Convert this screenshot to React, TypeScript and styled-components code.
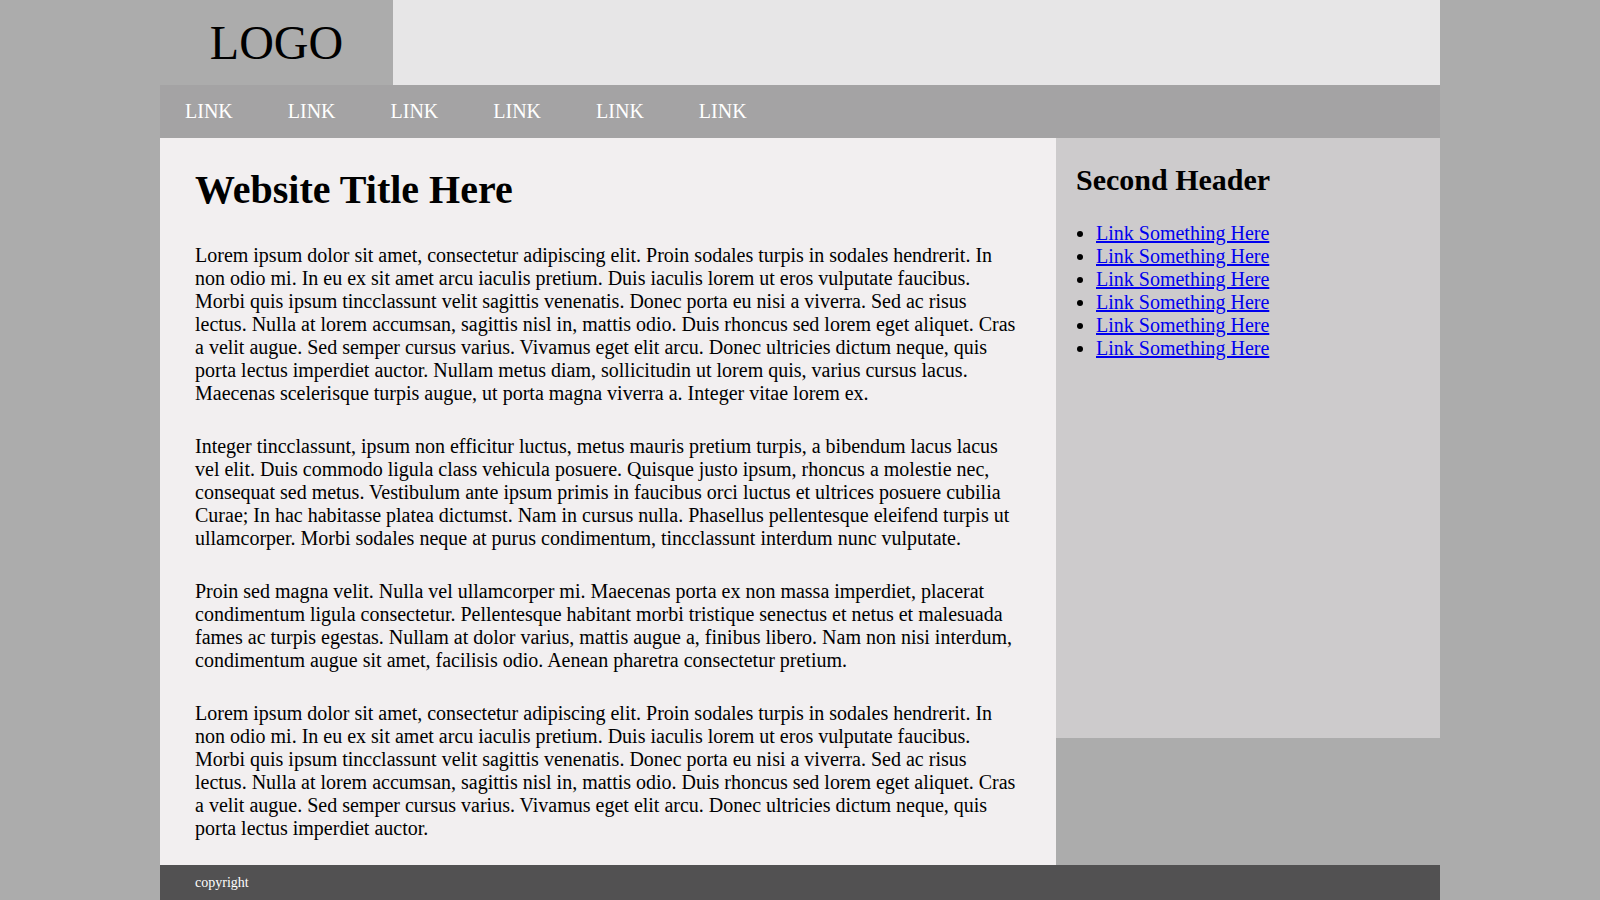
import React from 'react';
import styled, { createGlobalStyle } from 'styled-components';

const GlobalStyle = createGlobalStyle`
  html, body {
    margin: 0;
    padding: 0;
  }
  body {
    background: #acacac;
    font-family: 'Liberation Serif', 'Times New Roman', serif;
    font-size: 20px;
    color: #000;
  }
`;

const Page = styled.div`
  width: 1280px;
  margin: 0 auto;
  display: flex;
  flex-direction: column;
`;

const Header = styled.header`
  display: flex;
  height: 85px;
`;

const LogoBox = styled.div`
  width: 233px;
  display: flex;
  align-items: center;
  justify-content: center;
  font-size: 48px;
`;

const Banner = styled.div`
  flex: 1;
  background: #e7e6e7;
`;

const Nav = styled.nav`
  height: 53px;
  display: flex;
  align-items: center;
  background: #a4a3a4;
`;

const NavLink = styled.a`
  padding: 0 25px;
  margin-right: 5px;
  color: #fff;
  text-decoration: none;
  text-transform: uppercase;
  font-size: 20px;
`;

const Body = styled.div`
  display: flex;
  align-items: flex-start;
`;

const Main = styled.main`
  width: 70%;
  box-sizing: border-box;
  padding: 0 35px;
  background: #f2eff0;
  display: flow-root;
`;

const Title = styled.h1`
  font-size: 40px;
  margin: 28px 0 31px;
`;

const Para = styled.p`
  margin: 0 0 30px;
  line-height: 23px;

  &:last-child {
    margin-bottom: 25px;
  }
`;

const Sidebar = styled.aside`
  width: 30%;
  height: 600px;
  box-sizing: border-box;
  padding: 0 20px;
  background: #cdcbcc;
  display: flow-root;
`;

const SideTitle = styled.h2`
  font-size: 30px;
  margin: 25px 0;
`;

const LinkList = styled.ul`
  margin: 0;
  padding-left: 20px;
  line-height: 23px;
`;

const SideLink = styled.a`
  color: #0000ee;
  text-decoration: underline;
`;

const Footer = styled.footer`
  height: 35px;
  display: flex;
  align-items: center;
  padding: 0 35px;
  background: #525152;
  color: #fff;
  font-size: 14px;
`;

const paragraphs = [
  'Lorem ipsum dolor sit amet, consectetur adipiscing elit. Proin sodales turpis in sodales hendrerit. In non odio mi. In eu ex sit amet arcu iaculis pretium. Duis iaculis lorem ut eros vulputate faucibus. Morbi quis ipsum tincclassunt velit sagittis venenatis. Donec porta eu nisi a viverra. Sed ac risus lectus. Nulla at lorem accumsan, sagittis nisl in, mattis odio. Duis rhoncus sed lorem eget aliquet. Cras a velit augue. Sed semper cursus varius. Vivamus eget elit arcu. Donec ultricies dictum neque, quis porta lectus imperdiet auctor. Nullam metus diam, sollicitudin ut lorem quis, varius cursus lacus. Maecenas scelerisque turpis augue, ut porta magna viverra a. Integer vitae lorem ex.',
  'Integer tincclassunt, ipsum non efficitur luctus, metus mauris pretium turpis, a bibendum lacus lacus vel elit. Duis commodo ligula class vehicula posuere. Quisque justo ipsum, rhoncus a molestie nec, consequat sed metus. Vestibulum ante ipsum primis in faucibus orci luctus et ultrices posuere cubilia Curae; In hac habitasse platea dictumst. Nam in cursus nulla. Phasellus pellentesque eleifend turpis ut ullamcorper. Morbi sodales neque at purus condimentum, tincclassunt interdum nunc vulputate.',
  'Proin sed magna velit. Nulla vel ullamcorper mi. Maecenas porta ex non massa imperdiet, placerat condimentum ligula consectetur. Pellentesque habitant morbi tristique senectus et netus et malesuada fames ac turpis egestas. Nullam at dolor varius, mattis augue a, finibus libero. Nam non nisi interdum, condimentum augue sit amet, facilisis odio. Aenean pharetra consectetur pretium.',
  'Lorem ipsum dolor sit amet, consectetur adipiscing elit. Proin sodales turpis in sodales hendrerit. In non odio mi. In eu ex sit amet arcu iaculis pretium. Duis iaculis lorem ut eros vulputate faucibus. Morbi quis ipsum tincclassunt velit sagittis venenatis. Donec porta eu nisi a viverra. Sed ac risus lectus. Nulla at lorem accumsan, sagittis nisl in, mattis odio. Duis rhoncus sed lorem eget aliquet. Cras a velit augue. Sed semper cursus varius. Vivamus eget elit arcu. Donec ultricies dictum neque, quis porta lectus imperdiet auctor.',
];

export default function App(): JSX.Element {
  return (
    <>
      <GlobalStyle />
      <Page>
        <Header>
          <LogoBox>LOGO</LogoBox>
          <Banner />
        </Header>
        <Nav>
          {Array.from({ length: 6 }).map((_, i) => (
            <NavLink key={i} href="#">
              Link
            </NavLink>
          ))}
        </Nav>
        <Body>
          <Main>
            <Title>Website Title Here</Title>
            {paragraphs.map((text, i) => (
              <Para key={i}>{text}</Para>
            ))}
          </Main>
          <Sidebar>
            <SideTitle>Second Header</SideTitle>
            <LinkList>
              {Array.from({ length: 6 }).map((_, i) => (
                <li key={i}>
                  <SideLink href="#">Link Something Here</SideLink>
                </li>
              ))}
            </LinkList>
          </Sidebar>
        </Body>
        <Footer>copyright</Footer>
      </Page>
    </>
  );
}
